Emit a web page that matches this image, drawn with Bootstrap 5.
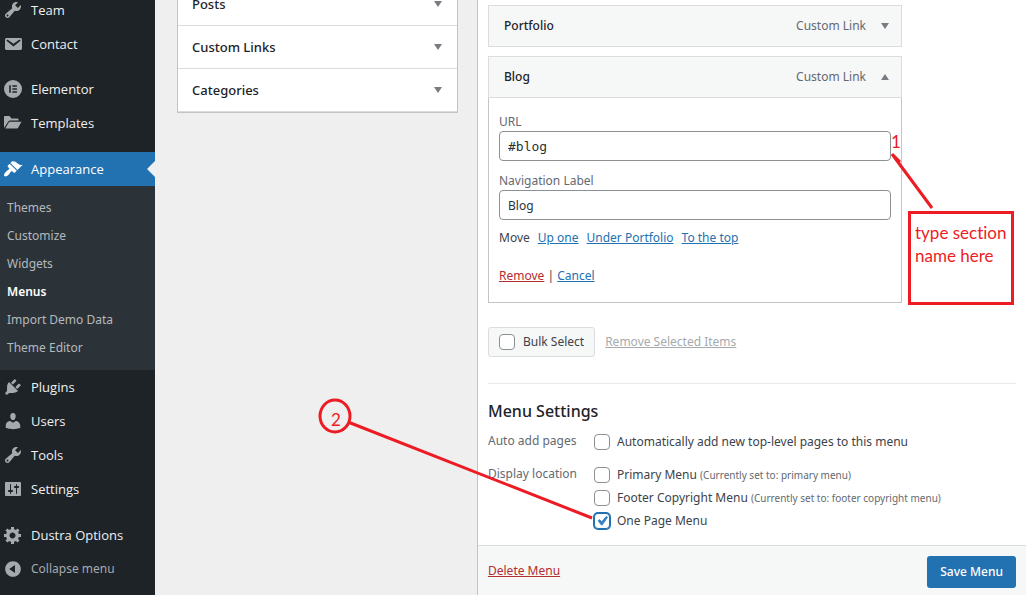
<!DOCTYPE html>
<html lang="en">
<head>
<meta charset="utf-8">
<meta name="viewport" content="width=device-width, initial-scale=1">
<title>Menus</title>
<link href="https://cdn.jsdelivr.net/npm/bootstrap@5.3.0/dist/css/bootstrap.min.css" rel="stylesheet">
<style>
  body { font: 12px/20px "Noto Sans", "Open Sans", sans-serif; color: #3c434a; background: #efefef; }
  a { color: #2271b1; }
  .admin { overflow: hidden; }

  /* Sidebar */
  .side { width: 155px; background: #1d2327; font-family: "Open Sans", sans-serif; font-size: 13px; }
  .side ul { list-style: none; margin: 0; padding: 0; }
  .side-top { margin-top: -7px !important; }
  .side-link { display: flex; align-items: center; gap: 8px; height: 34px; padding-left: 3px; color: #f0f0f1; text-decoration: none; background: none; border: 0; width: 100%; }
  .side-link svg { width: 20px; height: 20px; flex: none; fill: #a7aaad; fill-rule: evenodd; }
  .side-gap { margin-top: 12px; }
  .side-gap.tight { margin-top: 11px; }
  .side-link.current { position: relative; background: #2271b1; color: #fff; }
  .side-link.current svg { fill: #fff; }
  .side-link.current::after { content: ""; position: absolute; right: 0; top: 9px; border: 8px solid transparent; border-right-color: #efefef; border-left: 0; }
  .side-link.fold, .side .side-sub { font-family: "Noto Sans", sans-serif; font-size: 12px; }
  .side-link.fold { color: #a7aaad; }
  .side .side-sub { background: #2c3338; padding: 8px 0; }
  .side-sub a { display: block; padding-left: 7px; line-height: 28px; color: #b4b9be; text-decoration: none; }
  .side-sub a.on { color: #fff; font-weight: 600; }

  /* Add-items column */
  .add-col { width: 281px; margin: 0 19px 0 22px; flex: none; }
  .add-box { margin-top: -18px; background: #fff; border: 1px solid #c3c4c7; }
  .add-row { display: flex; align-items: center; justify-content: space-between; width: 100%; height: 43px; padding: 0 15px 0 14px; border: 0; border-bottom: 1px solid #dcdcde; background: #fff; color: #1d2327; font: 500 13px/20px "Noto Sans", sans-serif; }
  .tri { width: 8px; height: 6px; background: #787c82; clip-path: polygon(0 0, 100% 0, 50% 100%); flex: none; }
  .tri.up { clip-path: polygon(50% 0, 100% 100%, 0 100%); }

  /* Menu editor */
  .editor { background: #fff; border-left: 1px solid #c3c4c7; min-width: 0; }
  .edit-body { padding: 5px 10px 13px; }
  .items { max-width: 414px; }
  .item-bar { display: flex; align-items: center; height: 42px; padding: 0 12px 0 15px; border: 1px solid #dcdcde; background: #f6f7f7; color: #1d2327; font-weight: 500; }
  .item-bar + .item-bar { margin-top: 9px; }
  .item-bar .kind { margin-left: auto; margin-right: 15px; font-weight: 400; color: #646970; }
  .item-panel { border: 1px solid #c3c4c7; border-top: 0; padding: 15px 10px 16px; }
  .item-panel label { display: block; line-height: 18px; color: #646970; }
  .item-panel input + label { margin-top: 11px; }
  .panel-links { margin-top: 18px; }
  .wp-input { display: block; width: 100%; height: 30px; padding: 0 8px; border: 1px solid #8c8f94; border-radius: 4px; color: #2c3338; }
  .wp-input.code { font-family: "DejaVu Sans Mono", monospace; font-size: 13px; }
  .red { color: #b32d2e; }
  .removed { margin-left: 10px; color: #a7aaad; }
  .wp-check { appearance: none; width: 16px; height: 16px; margin: 0; border: 1px solid #8c8f94; border-radius: 4px; background: #fff; flex: none; }
  .wp-check:checked { border-color: #2271b1; box-shadow: 0 0 0 1px #2271b1; background: #fff url("data:image/svg+xml,%3Csvg xmlns='http://www.w3.org/2000/svg' viewBox='0 0 20 20'%3E%3Cpath d='M14.83 4.89l1.34.94-5.81 8.38H9.02L5.78 9.67l1.34-1.25 2.57 2.4z' fill='%233582c4' stroke='%233582c4'/%3E%3C/svg%3E") center/18px; }
  .bulk { height: 30px; padding: 0 10px; gap: 8px; border: 1px solid #dcdcde; border-radius: 3px; background: #f6f7f7; }
  .wp-rule { margin: 26px 0 16px; border-top: 1px solid #dcdcde; opacity: .6; }
  .heading { font-size: 16px; line-height: 22px; font-weight: 500; color: #1d2327; margin: 0 0 8px; }
  .set-row { margin-bottom: 10px; }
  .set-row:last-child { margin-bottom: 0; }
  .set-name { width: 106px; flex: none; line-height: 22px; color: #646970; }
  .opt { display: flex; align-items: center; gap: 7px; height: 23px; }
  .opt small { font-size: 10px; color: #646970; }
  .edit-foot { background: #f6f7f7; border-top: 1px solid #dcdcde; padding: 10px; }
  .delete { line-height: 30px; }
  .save { height: 32px; padding: 0 12px; border-radius: 3px; background: #2271b1; color: #fff; font-size: 12px; line-height: 30px; font-weight: 500; }

  /* Annotations over the screen */
  .marks { position: absolute; left: 0; top: 0; pointer-events: none; fill: none; stroke: #ed1c24; stroke-width: 3; }
  .mark-text { position: absolute; color: #ed1c24; font: 17px/23px Lato, sans-serif; font-variant-ligatures: none; }
  .mark-note { left: 908px; top: 211px; width: 106px; height: 94px; border: 3px solid #ed1c24; padding: 7px 0 0 4px; white-space: nowrap; }
  .mark-one { left: 891px; top: 130px; }
  .mark-two { left: 331px; top: 408px; }
</style>
</head>
<body>
<div class="admin d-flex min-vh-100 position-relative">
  <nav class="side flex-shrink-0" aria-label="Admin menu">
    <ul class="side-top">
      <li><a class="side-link" href="#"><svg viewBox="0 0 20 20"><path d="M16.68 9.77c-1.34 1.34-3.3 1.67-4.95.99l-5.41 6.52c-.99.99-2.59.99-3.58 0s-.99-2.59 0-3.57l6.52-5.42c-.68-1.65-.35-3.61.99-4.95 1.28-1.28 3.12-1.62 4.72-1.06l-2.89 2.89 2.82 2.82 2.86-2.87c.53 1.58.18 3.39-1.08 4.65zM3.81 16.21c.4.39 1.04.39 1.43 0 .4-.4.4-1.04 0-1.43-.39-.4-1.03-.4-1.43 0-.39.39-.39 1.03 0 1.43z"/></svg>Team</a></li>
      <li><a class="side-link" href="#"><svg viewBox="0 0 20 20"><path d="M3.87 4h13.25C18.37 4 19 4.59 19 5.79v8.42c0 1.19-.63 1.79-1.88 1.79H3.87c-1.25 0-1.88-.6-1.88-1.79V5.79c0-1.2.63-1.79 1.88-1.79zm6.62 8.6l6.74-5.53c.24-.2.43-.66.13-1.07-.29-.41-.82-.42-1.17-.17l-5.7 3.86L4.8 5.83c-.35-.25-.88-.24-1.17.17-.3.41-.11.87.13 1.07z"/></svg>Contact</a></li>
      <li class="side-gap tight"><a class="side-link" href="#"><svg viewBox="0 0 20 20"><path d="M10 1a9 9 0 1 0 0 18 9 9 0 0 0 0-18zM6.2 6.2h1.6v7.6H6.2zm3.1 0h4.6v1.5H9.3zm0 3.05h4.6v1.5H9.3zm0 3.05h4.6v1.5H9.3z"/></svg>Elementor</a></li>
      <li><a class="side-link" href="#"><svg viewBox="0 0 20 20"><path d="M1 15V3.8Q1 3 1.8 3h4.4q.6 0 .9.5L8.3 5.500h6.200q1 0 1 1v1H7.300q-1.400 0-2.100 1.200zM2.300 15.500l3.300-5.800q.5-.9 1.500-.9h11.400l-3.200 5.800q-.5.900-1.500.9z"/></svg>Templates</a></li>
      <li class="side-gap"><a class="side-link current" href="#" aria-current="true"><svg viewBox="0 0 20 20"><path d="M14.480 11.060L7.410 3.990l1.500-1.500c.5-.56 2.300-.47 3.510.32 1.210.8 1.430 1.280 2.910 2.100 1.180.64 2.450 1.260 4.450.85zm-.71.71L6.700 4.700 4.930 6.470c-.39.39-.39 1.020 0 1.410l1.060 1.060c.39.39.39 1.030 0 1.420-.6.6-1.430 1.110-2.210 1.690-.35.26-.7.53-1.010.84C1.430 14.230.4 16.080 1.400 17.070c.99 1 2.840-.03 4.180-1.360.31-.31.58-.66.85-1.020.57-.78 1.080-1.610 1.690-2.210.39-.39 1.020-.39 1.410 0l1.060 1.060c.39.39 1.020.39 1.410 0z"/></svg>Appearance</a>
        <ul class="side-sub">
          <li><a href="#">Themes</a></li>
          <li><a href="#">Customize</a></li>
          <li><a href="#">Widgets</a></li>
          <li><a href="#" class="on" aria-current="page">Menus</a></li>
          <li><a href="#">Import Demo Data</a></li>
          <li><a href="#">Theme Editor</a></li>
        </ul>
      </li>
      <li><a class="side-link" href="#"><svg viewBox="0 0 20 20"><path d="M13.110 4.360L9.870 7.600 8 5.730l3.240-3.240c.35-.34 1.050-.2 1.560.32.520.510.660 1.210.310 1.550zm-8 1.770l.910-1.120 9.010 9.010-1.190.84c-.71.71-2.630 1.160-3.820 1.160H6.140L4.900 17.260c-.59.59-1.540.59-2.120 0-.59-.58-.59-1.530 0-2.120l1.240-1.240v-3.880c0-1.130.4-3.190 1.090-3.890zm7.260 3.970l3.240-3.240c.34-.35 1.040-.21 1.550.31.520.510.660 1.210.310 1.550l-3.240 3.250z"/></svg>Plugins</a></li>
      <li><a class="side-link" href="#"><svg viewBox="0 0 20 20"><path d="M10 9.250c-2.270 0-2.730-3.440-2.730-3.440C7 4.020 7.820 2 9.970 2c2.160 0 2.980 2.020 2.710 3.810 0 0-.41 3.440-2.680 3.440zm0 2.570L12.720 10c2.390 0 4.520 2.330 4.520 4.530v2.490s-3.650 1.130-7.240 1.130c-3.650 0-7.240-1.130-7.240-1.130v-2.490c0-2.250 1.940-4.480 4.470-4.480z"/></svg>Users</a></li>
      <li><a class="side-link" href="#"><svg viewBox="0 0 20 20"><path d="M16.680 9.770c-1.340 1.340-3.300 1.670-4.950.99l-5.410 6.520c-.99.99-2.590.99-3.580 0s-.99-2.590 0-3.570l6.520-5.420c-.68-1.650-.35-3.610.99-4.950 1.280-1.280 3.120-1.620 4.720-1.060l-2.890 2.890 2.820 2.820 2.860-2.870c.53 1.580.18 3.390-1.080 4.650zM3.810 16.210c.4.39 1.040.39 1.430 0 .4-.4.4-1.040 0-1.430-.39-.4-1.030-.4-1.430 0-.39.39-.39 1.030 0 1.430z"/></svg>Tools</a></li>
      <li><a class="side-link" href="#"><svg viewBox="0 0 20 20"><path d="M18 16V4c0-.55-.45-1-1-1H3c-.55 0-1 .45-1 1v12c0 .55.45 1 1 1h14c.55 0 1-.45 1-1zM8 11h1c.55 0 1 .45 1 1s-.45 1-1 1H8v1.500c0 .28-.22.5-.5.5s-.5-.22-.5-.5V13H6c-.55 0-1-.45-1-1s.45-1 1-1h1V5.500c0-.28.22-.5.5-.5s.5.22.5.5V11zm5-2h-1c-.55 0-1-.45-1-1s.45-1 1-1h1V5.500c0-.28.22-.5.5-.5s.5.22.5.5V7h1c.55 0 1 .45 1 1s-.45 1-1 1h-1v5.500c0 .28-.22.5-.5.5s-.5-.22-.5-.5V9z"/></svg>Settings</a></li>
      <li class="side-gap"><a class="side-link" href="#"><svg viewBox="0 0 20 20"><path d="M18 12h-2.180c-.17.7-.44 1.350-.81 1.930l1.540 1.540-2.100 2.100-1.540-1.540c-.58.36-1.230.63-1.910.79V19H8v-2.180c-.68-.16-1.330-.43-1.910-.79l-1.540 1.540-2.120-2.120 1.540-1.540c-.36-.58-.63-1.230-.79-1.910H1V9.030h2.170c.16-.7.44-1.350.8-1.940L2.430 5.550l2.100-2.100 1.540 1.540c.58-.37 1.240-.64 1.930-.81V2h3v2.180c.68.16 1.330.43 1.910.79l1.540-1.540 2.120 2.120-1.540 1.540c.36.59.64 1.240.8 1.940H18V12zm-8.500 1.500c1.660 0 3-1.340 3-3s-1.340-3-3-3-3 1.340-3 3 1.340 3 3 3z"/></svg>Dustra Options</a></li>
      <li><button type="button" class="side-link fold"><svg viewBox="0 0 20 20"><path d="M10 2.160c4.330 0 7.840 3.510 7.840 7.840s-3.510 7.840-7.840 7.840S2.160 14.330 2.160 10 5.710 2.160 10 2.160zm2 11.720V6.120L6.180 9.970z"/></svg>Collapse menu</button></li>
    </ul>
  </nav>

  <section class="add-col" aria-label="Add menu items">
    <div class="add-box">
      <button type="button" class="add-row">Posts<span class="tri"></span></button>
      <button type="button" class="add-row">Custom Links<span class="tri"></span></button>
      <button type="button" class="add-row">Categories<span class="tri"></span></button>
    </div>
  </section>

  <main class="editor d-flex flex-column flex-grow-1">
    <div class="edit-body">
      <div class="items">
        <div class="item-bar">Portfolio<span class="kind">Custom Link</span><span class="tri"></span></div>
        <div class="item-bar">Blog<span class="kind">Custom Link</span><span class="tri up"></span></div>
        <div class="item-panel">
          <label for="url">URL</label>
          <input id="url" class="wp-input code" type="text" value="#blog">
          <label for="nav-label">Navigation Label</label>
          <input id="nav-label" class="wp-input" type="text" value="Blog">
          <div class="d-flex gap-2 mt-2"><span>Move</span><a href="#">Up one</a><a href="#">Under Portfolio</a><a href="#">To the top</a></div>
          <div class="panel-links"><a class="red" href="#">Remove</a> | <a href="#">Cancel</a></div>
        </div>
      </div>
      <div class="d-flex align-items-center mt-4">
        <label class="bulk d-flex align-items-center"><input class="wp-check" type="checkbox">Bulk Select</label>
        <a href="#" class="removed">Remove Selected Items</a>
      </div>
      <hr class="wp-rule">
      <h3 class="heading">Menu Settings</h3>
      <div class="d-flex set-row">
        <span class="set-name">Auto add pages</span>
        <label class="opt"><input class="wp-check" type="checkbox">Automatically add new top-level pages to this menu</label>
      </div>
      <div class="d-flex set-row">
        <span class="set-name">Display location</span>
        <div>
          <label class="opt"><input class="wp-check" type="checkbox"><span>Primary Menu <small>(Currently set to: primary menu)</small></span></label>
          <label class="opt"><input class="wp-check" type="checkbox"><span>Footer Copyright Menu <small>(Currently set to: footer copyright menu)</small></span></label>
          <label class="opt"><input class="wp-check" type="checkbox" checked>One Page Menu</label>
        </div>
      </div>
    </div>
    <div class="edit-foot d-flex justify-content-between align-items-start flex-grow-1">
      <a href="#" class="red delete">Delete Menu</a>
      <button type="button" class="btn save">Save Menu</button>
    </div>
  </main>

  <svg class="marks" width="1020" height="590" viewBox="0 0 1020 590" aria-hidden="true">
    <path d="M892 154L932 208M893 155L900 162M348 422L592 518"/>
    <ellipse cx="335" cy="416" rx="15" ry="16"/>
  </svg>
  <div class="mark-text mark-one">1</div>
  <div class="mark-text mark-two">2</div>
  <div class="mark-text mark-note">type section<br>name here</div>
</div>
<script src="https://cdn.jsdelivr.net/npm/bootstrap@5.3.0/dist/js/bootstrap.bundle.min.js"></script>
</body>
</html>
